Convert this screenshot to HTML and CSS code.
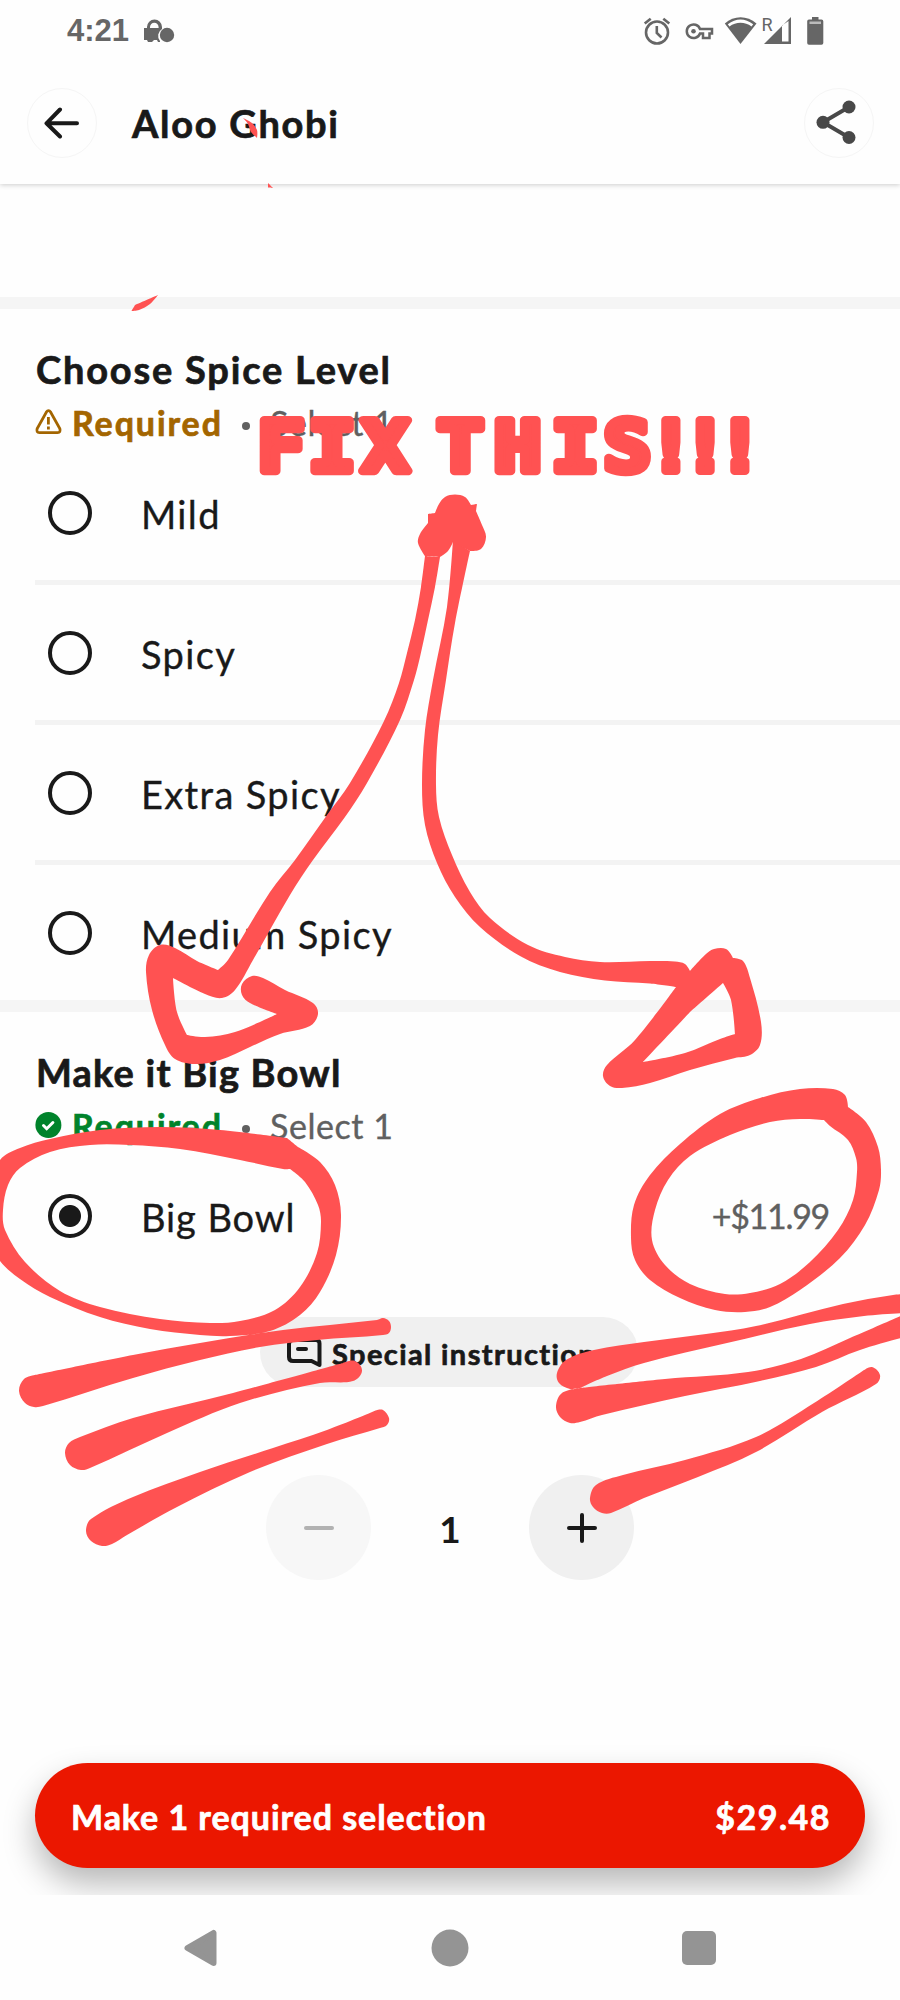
FILE: index.html
```html
<!DOCTYPE html>
<html lang="en">
<head>
<meta charset="utf-8">
<title>Aloo Ghobi</title>
<link rel="stylesheet" href="styles.css">
</head>
<body>
<div class="screen">
  <div class="status">
    <span class="clock">4:21</span>
    <svg class="status-left" width="32" height="26" viewBox="0 0 32 26"><path d="M1 9h3V8a7.500 7.500 0 0 1 15 0v2a8 8 0 0 0-2 12v1h-2l-1-2h-3l-2 2H5l-1-2H1z" fill="#666"/><path d="M7 9V8a4.300 4.300 0 0 1 8.600 0v1z" fill="#fff"/><circle cx="24" cy="16" r="7.200" fill="#666"/></svg>
    <svg class="status-right" width="190" height="32" viewBox="640 14 190 32">
      <g fill="none" stroke="#666" stroke-width="2.600"><circle cx="657" cy="32.500" r="11"/><path d="M656.800 26v7l4.700 4.500M644.700 23.500l6-4.800M669.300 23.500l-6-4.800"/></g>
      <path d="M700 29h12v4.500h-2.500V38H703v-4.500h-3A6.800 6.800 0 1 1 700 29z" fill="none" stroke="#666" stroke-width="2.500"/><circle cx="693.500" cy="31.200" r="2.300" fill="#666"/>
      <path d="M740.500 44l-15.700-20.500C734 15 747 15 756.500 23.500z" fill="#666"/><path d="M727.800 24.300C736 18 745 18 753.200 24.300l-1.700 2.200C745 21.500 736 21.500 729.500 26.500z" fill="#fff"/>
      <path d="M764 44l27-27v27zM782 25.500V41.500h6.500V21z" fill="#666" fill-rule="evenodd"/>
      <text x="761.500" y="30.500" class="roaming">R</text>
      <path d="M812 17h6.500v2.500h3q1.800 0 1.800 1.800V43q0 1.800-1.800 1.800h-12.500q-1.800 0-1.800-1.800V21.300q0-1.800 1.800-1.800h3z" fill="#666"/><path d="M809.500 21.500h11.500v2.500h-11.500z" fill="#bbb"/>
    </svg>
  </div>
  <header class="header">
    <button class="round back"><svg width="36" height="32" viewBox="0 0 36 32"><path d="M17 2.500L3.500 16.300 17 29.500M3.500 16.300H34" fill="none" stroke="#191919" stroke-width="4" stroke-linecap="round" stroke-linejoin="round"/></svg></button>
    <h1 class="title">Aloo Ghobi</h1>
    <button class="round share"><svg width="40" height="44" viewBox="0 0 40 44"><path d="M33 7L7 22.300 33 37.500" fill="none" stroke="#484848" stroke-width="4"/><g fill="#484848"><circle cx="33" cy="7" r="6.500"/><circle cx="7" cy="22.300" r="6.500"/><circle cx="33" cy="37.500" r="6.500"/></g></svg></button>
  </header>
  <main class="content">
    <section class="group spice">
      <h2 class="group-title t-choose">Choose Spice Level</h2>
      <div class="meta warn">
        <svg width="27" height="26" viewBox="0 0 27 26"><path d="M11.300 3.200q2.200-3 4.400 0L24.800 19.500q1.200 4-2.300 4.200h-18q-3.500-.2-2.300-4.200z" fill="none" stroke="#a36500" stroke-width="2.800"/><path d="M13.400 8v7.500M13.400 17.500v3" stroke="#a36500" stroke-width="2.800"/></svg>
        <b class="req">Required</b><i class="dot"></i><span class="sel">Select 1</span>
      </div>
      <label class="option"><i class="radio"></i><span class="name">Mild</span></label>
      <label class="option"><i class="radio"></i><span class="name">Spicy</span></label>
      <label class="option"><i class="radio"></i><span class="name">Extra Spicy</span></label>
      <label class="option"><i class="radio"></i><span class="name">Medium Spicy</span></label>
    </section>
    <section class="group bowl">
      <h2 class="group-title t-bowl">Make it Big Bowl</h2>
      <div class="meta done">
        <svg width="27" height="26" viewBox="0 0 27 26"><circle cx="13.400" cy="13" r="13" fill="#00832b"/><path d="M8.500 13.500l3.200 3.200 6.200-6.200" fill="none" stroke="#fff" stroke-width="3" stroke-linecap="round"/></svg>
        <b class="req">Required</b><i class="dot"></i><span class="sel">Select 1</span>
      </div>
      <label class="option"><i class="radio on"></i><span class="name n-bowl">Big Bowl</span><span class="price">+$11.99</span></label>
    </section>
    <button class="special"><svg width="35" height="30" viewBox="0 0 35 30"><path d="M6 2h23q3.500 0 3.500 3.500V27l-8-4H6q-4 0-4-4V6q0-4 4-4zM11 11h8" fill="none" stroke="#191919" stroke-width="4" stroke-linecap="round" stroke-linejoin="round"/></svg><span>Special instructions</span></button>
    <div class="stepper">
      <button class="step off"><svg width="30" height="30" viewBox="0 0 30 30"><path d="M2 15h26" stroke="#b2b2b2" stroke-width="4" stroke-linecap="round"/></svg></button>
      <b class="qty">1</b>
      <button class="step"><svg width="30" height="30" viewBox="0 0 30 30"><path d="M2 15h26M15 2v26" stroke="#191919" stroke-width="4" stroke-linecap="round"/></svg></button>
    </div>
    <button class="cta"><span class="cta-label">Make 1 required selection</span><span class="cta-price">$29.48</span></button>
  </main>
  <nav class="nav">
    <svg width="35" height="38" viewBox="0 0 35 38"><path d="M4.500 19L30.500 4V34z" fill="#949494" stroke="#949494" stroke-width="6" stroke-linejoin="round"/></svg>
    <svg width="38" height="38" viewBox="0 0 38 38"><circle cx="19" cy="19" r="18.500" fill="#949494"/></svg>
    <svg width="34" height="34" viewBox="0 0 34 34"><rect width="34" height="34" rx="5" fill="#949494"/></svg>
  </nav>
  <svg class="ink" width="900" height="2000" viewBox="0 0 900 2000">
    <path id="ink" fill="#ff5252" fill-rule="evenodd"/>
    <path id="blob" fill="#ff5252"/>
    <text class="shout" transform="scale(1.12 1)" y="471" x="230 275.500 323 390 441 492.500 539 578 608.500 639.500">FIXTHIS<tspan class="bang">!!!</tspan></text>
  </svg>
</div>
<script src="ink.js"></script>
</body>
</html>
```
FILE: styles.css
```css
* { box-sizing: border-box; }
body { margin: 0; background: #fefefe; font-family: Lato, "Open Sans", sans-serif; color: #191919; }
button { border: 0; padding: 0; font: inherit; color: inherit; background: none; letter-spacing: inherit; }
h1, h2 { margin: 0; }
svg { display: block; flex: none; }
.screen { position: relative; width: 900px; height: 2000px; overflow: hidden; background: #fefefe; display: flex; flex-direction: column; }
.status { height: 62px; flex: none; display: flex; align-items: flex-start; padding: 14px 70px 0 67px; }
.clock { font: 700 31px/34px "Liberation Sans", sans-serif; color: #666; width: 76px; white-space: nowrap; }
.status-left { margin-top: 5px; }
.status-right { margin-left: auto; }
.roaming { font: 18px Roboto, sans-serif; fill: #666; }
.header { height: 122px; flex: none; display: flex; align-items: center; padding: 0 26px 0 27px; box-shadow: 0 1px 5px rgba(0,0,0,.2); clip-path: inset(0 0 -8px 0); }
.round { width: 70px; height: 70px; border-radius: 50%; border: 1px solid #f5f5f5; display: flex; align-items: center; justify-content: center; }
.back { padding-right: 3px; }
.share { margin-left: auto; padding-right: 6px; padding-bottom: 3px; }
.title, .group-title, .req, .special, .cta { -webkit-text-stroke: .7px currentColor; }
.name, .sel, .price { -webkit-text-stroke: .35px currentColor; }
.title { margin-left: 35px; font-size: 38px; line-height: 44px; font-weight: 700; white-space: nowrap; letter-spacing: 1.7px; }
.content { height: 1711px; flex: none; overflow: hidden; padding-top: 113px; display: flex; flex-direction: column; }
.group { flex: none; border-top: 12px solid #f5f5f5; padding-top: 38px; }
.spice { height: 703px; }
.bowl { height: 317px; }
.group-title { padding-left: 36px; font-size: 38px; line-height: 44px; font-weight: 700; white-space: nowrap; }
.t-choose { letter-spacing: 1.8px; }
.t-bowl { letter-spacing: 1.2px; }
.meta { display: flex; align-items: center; height: 40px; margin: 12px 0 2px 35px; font-size: 33px; line-height: 40px; white-space: nowrap; }
.meta svg { margin-bottom: 2px; }
.req { width: 150px; margin-left: 10px; font-size: 34px; letter-spacing: 1.9px; }
.dot { width: 8px; height: 8px; border-radius: 50%; background: #606060; margin: 5px 20px 0 20px; }
.sel { color: #606060; font-size: 34px; letter-spacing: .55px; }
.warn .req { color: #a36500; }
.done .req { color: #00832b; }
.option { display: flex; align-items: center; height: 140px; margin-left: 35px; padding: 0 71px 0 13px; border-bottom: 5px solid #f3f3f3; font-size: 38px; white-space: nowrap; }
.option:last-child { border-bottom-color: transparent; }
.radio { width: 44px; height: 44px; border: 4px solid #191919; border-radius: 50%; margin-right: 49px; flex: none; }
.on { background: radial-gradient(circle, #191919 10.500px, transparent 11.500px); }
.name { padding-top: 2px; letter-spacing: 1.35px; }
.n-bowl { letter-spacing: .9px; }
.price { margin-left: auto; font-size: 34px; color: #606060; letter-spacing: -1.3px; }
.special { flex: none; align-self: center; width: 378px; height: 70px; margin-left: -2px; border-radius: 35px; background: #f0f0f0; display: flex; align-items: center; padding: 2px 0 0 27px; font-size: 29px; font-weight: 700; white-space: nowrap; letter-spacing: 1.4px; }
.special svg { margin-right: 10px; }
.stepper { flex: none; display: flex; justify-content: space-between; align-items: center; width: 368px; margin: 88px auto 0; }
.step { width: 105px; height: 105px; border-radius: 50%; background: #f0f0f0; display: flex; align-items: center; justify-content: center; }
.off { background: #f7f7f7; }
.qty { font-size: 37px; padding-top: 1px; }
.cta { flex: none; height: 105px; margin: 183px 35px 0; border-radius: 53px; background: #eb1700; color: #fff; display: flex; align-items: center; justify-content: space-between; padding: 2px 34px 0 36px; font-size: 34px; font-weight: 700; box-shadow: 0 16px 32px rgba(0,0,0,.28); white-space: nowrap; }
.cta-label { letter-spacing: .95px; }
.cta-price { letter-spacing: 1.5px; }
.nav { height: 105px; display: flex; align-items: center; justify-content: space-between; padding: 0 184px 0 183px; }
.ink { position: absolute; left: 0; top: 0; }
.shout { font: 700 70px "DejaVu Sans Mono", monospace; fill: #ff5252; stroke: #ff5252; stroke-width: 8.5px; stroke-linejoin: round; }
.bang { stroke-width: 8px; }
```
FILE: ink.js
```js
// Outlines of the hand-drawn marks. "!" marks a sharp corner; other points are smoothed.
const outlines = [
  // left arrow
  "425,556! 421,587 415,620 407,653 399,683 384,721 350,783 327,815 295,860 270,892 228,960 218,970! 197,961 175,948 160,945 149,955 146,972 152,1010 165,1045 175,1059 195,1064 220,1060 250,1047 280,1034 310,1026 318,1014 313,1003 285,990 263,978 252,976 242,984 242,995 250,1003 277,1014! 235,1032 205,1037 187,1035! 177,1012 173,978! 205,994 222,998 235,990 253,960 290,895 313,860 345,817 367,783 400,720 414,680 420,657 428,620 435,587 440,557!",
  // right arrow
  "453,540! 447,607 433,680 425,730 422,785 425,825 437,863 455,897 480,927 520,956 560,972 605,980.5 650,983.5 676,987! 635,1040 607,1065 603,1076 610,1086 622,1088 650,1083 690,1070 735,1058 750,1055 760,1045 761,1022 750,978 743,961 733,958! 726,949 714,949 706,954 690,971! 685,964 675,961.5 650,961 600,962 565,957 528,945 490,918 470,892 452,855 439,817 436,785 438,735 446,680 455,623 470,551!",
  "723,983! 731,1000 735,1034! 720,1039 685,1053 643,1062! 690,1012!",
  // left ring, outer and inner edge
  "298,1147! 320,1162 335,1185 341,1215 336,1255 320,1292 300,1315 270,1331 230,1336 200,1335 150,1329 100,1317 50,1297 20,1279 0,1261 -30,1215 0,1160 20,1148 50,1139 100,1130 160,1127 220,1130 287,1138!",
  "290,1169! 305,1182 318,1205 321,1222 317,1253 300,1287 275,1310 240,1321 210,1323 160,1319 100,1307 60,1291 25,1262 5,1230 3,1210 8,1185 20,1168 50,1152 90,1145 130,1145 180,1149 240,1160 283,1169",
  // right ring
  "833,1089 845,1095 848,1107! 866,1122 878,1147 881,1170 879,1190 865,1225 840,1258 800,1290 770,1307 745,1312 715,1310 680,1298 650,1280 635,1260 631,1238 634,1205 650,1175 680,1144 720,1114 760,1098 800,1089",
  "824,1120! 830,1126 848,1140 856,1158 857,1172 853,1200 838,1230 810,1262 780,1284 750,1293 725,1294 690,1284 665,1265 652,1240 655,1210 668,1180 690,1156 730,1135 770,1122 800,1119",
  // left dashes
  "35,1375! 133,1355 200,1343 283,1330 377,1320 383,1318 389,1321 391,1327 389,1333 383,1335 317,1340 260,1347 200,1360 133,1378 43,1406 34,1407 25,1403 19,1391 24,1379",
  "343,1363! 355,1361 362,1371 353,1381 320,1383 240,1403 167,1433 90,1468 81,1470 70,1465 65,1453 69,1443 80,1437 133,1418 233,1393",
  "377,1410! 383,1410 389,1418 387,1425 380,1428 327,1444 250,1472 177,1507 127,1535 112,1544 102,1546 91,1541 86,1531 91,1519 133,1497 200,1472 273,1448 327,1430",
  // right dashes
  "557,1373 566,1360 594,1350 644,1342 706,1334 756,1326 843,1304 893,1295 905,1294! 905,1313! 864,1316 810,1324 727,1343 644,1363 607,1376 580,1388! 570,1389 559,1383",
  "580,1388! 665,1379 748,1372 801,1359 850,1338 905,1314! 905,1337! 860,1350 816,1367 760,1381 685,1396 602,1415 580,1422 570,1423 560,1417 556,1406 562,1393",
  "864,1370! 872,1367 880,1375 876,1384 822,1412 756,1452 698,1477 644,1498 611,1513 602,1513 593,1507 590,1498 596,1485 623,1475 685,1460 756,1437 814,1403",
  // stray nicks
  "243,118! 252,123 257,130 257,138! 251,132 248,124",
  "268,183! 273,188! 268,187.5!",
  "131.5,311! 135,305! 158,295! 150,304 139,310"
];
const arrowTips = ["435,513! 428,514! 428,523! 420,534 418,543 425,556! 440,557! 448,551 453,542! 470,551! 481,549 486,537 482,525 476,511! 477,504! 471,505! 465,497 455,494.5 445,497 439,504"];

function smooth(outline) {
  const pts = outline.split(" ").map(s => {
    const [x, y] = s.replace("!", "").split(",").map(Number);
    return { x, y, corner: s.endsWith("!") };
  });
  const n = pts.length;
  const at = i => pts[(i + n) % n];
  const control = (i, side) => {
    const p = at(i);
    if (p.corner) return p;
    const a = at(i - 1), b = at(i + 1), q = at(i + side);
    const len = Math.hypot(q.x - p.x, q.y - p.y);
    const chord = Math.hypot(b.x - a.x, b.y - a.y) || 1;
    const k = side * len / chord / 3;
    return { x: p.x + (b.x - a.x) * k, y: p.y + (b.y - a.y) * k };
  };
  let d = `M${pts[0].x} ${pts[0].y}`;
  for (let i = 0; i < n; i++) {
    const c = control(i, 1), e = control(i + 1, -1), p = at(i + 1);
    d += `C${c.x} ${c.y} ${e.x} ${e.y} ${p.x} ${p.y}`;
  }
  return d + "Z";
}
document.getElementById("ink").setAttribute("d", outlines.map(smooth).join(""));
document.getElementById("blob").setAttribute("d", arrowTips.map(smooth).join(""));
```
